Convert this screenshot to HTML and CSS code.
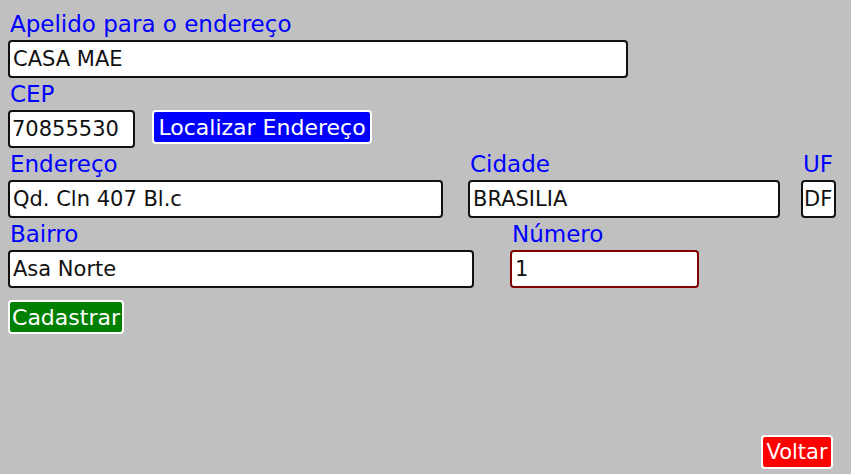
FILE: index.html
```html
<!DOCTYPE html>
<html lang="pt-BR">
<head>
<meta charset="utf-8">
<title>Endereço</title>
<link rel="stylesheet" href="styles.css">
</head>
<body>
<div class="page">
  <form class="form">
    <div class="field">
      <label class="label">Apelido para o endereço</label>
      <input class="input w-apelido" type="text" value="CASA MAE">
    </div>
    <div class="field">
      <label class="label">CEP</label>
      <div class="cep-row">
        <input class="input w-cep" type="text" value="70855530">
        <button type="button" class="btn btn-blue w-localizar">Localizar Endereço</button>
      </div>
    </div>
    <div class="row row-3">
      <div class="field">
        <label class="label">Endereço</label>
        <input class="input w-endereco" type="text" value="Qd. Cln 407 Bl.c">
      </div>
      <div class="field">
        <label class="label">Cidade</label>
        <input class="input w-cidade" type="text" value="BRASILIA">
      </div>
      <div class="field">
        <label class="label">UF</label>
        <input class="input w-uf" type="text" value="DF">
      </div>
    </div>
    <div class="row row-4">
      <div class="field">
        <label class="label">Bairro</label>
        <input class="input w-bairro" type="text" value="Asa Norte">
      </div>
      <div class="field">
        <label class="label">Número</label>
        <input class="input input-focus w-numero" type="text" value="1" autofocus>
      </div>
    </div>
    <div class="actions">
      <button type="button" class="btn btn-green w-cadastrar">Cadastrar</button>
    </div>
  </form>
  <button type="button" class="btn btn-red w-voltar">Voltar</button>
</div>
</body>
</html>
```
FILE: styles.css
```css
html, body {
  margin: 0;
  padding: 0;
  background: #c0c0c0;
}
body {
  font-family: "DejaVu Sans", Verdana, sans-serif;
}
.page {
  box-sizing: border-box;
  min-height: 100vh;
  padding: 8px 18px 5px 8px;
  display: flex;
  flex-direction: column;
}
.form {
  display: flex;
  flex-direction: column;
}
.field {
  display: flex;
  flex-direction: column;
}
.label {
  display: block;
  height: 32px;
  line-height: 32px;
  padding-left: 2px;
  font-size: 23px;
  color: #0000ff;
  white-space: nowrap;
}
.input {
  box-sizing: border-box;
  height: 38px;
  border: 2px solid #111111;
  border-radius: 4px;
  background: #ffffff;
  padding: 0 3px;
  font-family: "DejaVu Sans", Verdana, sans-serif;
  font-size: 21px;
  color: #111111;
  outline: none;
  margin: 0;
}
.input-focus {
  border-color: #800000;
  caret-color: #000000;
}
.cep-row {
  display: flex;
  align-items: flex-start;
  gap: 17px;
}
.row {
  display: flex;
}
.row-3 .field + .field {
  margin-left: 25px;
}
.row-3 .field:last-child {
  margin-left: 21px;
}
.row-4 .field + .field {
  margin-left: 36px;
}
.w-apelido { width: 620px; }
.w-cep { width: 127px; padding: 0 2px; }
.w-endereco { width: 435px; }
.w-cidade { width: 312px; }
.w-uf { width: 35px; padding: 0 1px; }
.w-bairro { width: 466px; }
.w-numero { width: 189px; }
.btn {
  box-sizing: border-box;
  height: 34px;
  border: 2px solid #ffffff;
  border-radius: 4px;
  color: #ffffff;
  font-family: "DejaVu Sans", Verdana, sans-serif;
  font-size: 22px;
  padding: 0;
  margin: 0;
  white-space: nowrap;
}
.btn-blue { background: #0000ff; }
.btn-green { background: #008000; }
.btn-red { background: #ff0000; }
.w-localizar { width: 220px; }
.w-cadastrar { width: 116px; }
.w-voltar { width: 72px; font-size: 21px; }
.actions {
  margin-top: 12px;
  display: flex;
}
.w-voltar {
  align-self: flex-end;
  margin-top: auto;
}
```
